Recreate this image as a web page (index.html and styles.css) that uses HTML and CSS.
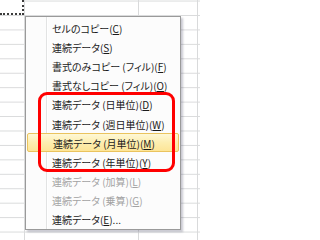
FILE: index.html
```html
<!DOCTYPE html>
<html lang="ja">
<head>
<meta charset="utf-8">
<link rel="stylesheet" href="styles.css">
</head>
<body>
<div class="sheet">
  <div class="cell-selected"></div>
  <div class="menu">
    <div class="item">セルのコピー(<u>C</u>)</div>
    <div class="item">連続データ(<u>S</u>)</div>
    <div class="item">書式のみコピー (フィル)(<u>F</u>)</div>
    <div class="item">書式なしコピー (フィル)(<u>O</u>)</div>
    <div class="item">連続データ (日単位)(<u>D</u>)</div>
    <div class="item">連続データ (週日単位)(<u>W</u>)</div>
    <div class="item hover">連続データ (月単位)(<u>M</u>)</div>
    <div class="item">連続データ (年単位)(<u>Y</u>)</div>
    <div class="item disabled">連続データ (加算)(<u>L</u>)</div>
    <div class="item disabled">連続データ (乗算)(<u>G</u>)</div>
    <div class="item">連続データ(<u>E</u>)...</div>
  </div>
  <div class="mark"></div>
</div>
</body>
</html>
```

FILE: styles.css
```css
html, body {
  margin: 0;
  padding: 0;
  background: #ffffff;
}
.sheet {
  position: relative;
  width: 200px;
  height: 240px;
  overflow: hidden;
  background-color: #ffffff;
  background-image:
    linear-gradient(to right, transparent 0 24px, #d9dadb 24px 25px, transparent 25px 138px, #d9dadb 138px 139px, transparent 139px 197px, #d9dadb 197px 198px, transparent 198px),
    linear-gradient(to bottom, #d9dadb 0 1px, transparent 1px);
  background-size: 100% 100%, 100% 14.44px;
  background-position: 0 0, 0 15px;
  background-repeat: no-repeat, repeat;
  font-family: "Noto Sans CJK JP", "Noto Sans", sans-serif;
  font-feature-settings: "palt";
}
.cell-selected {
  width: 22px;
  height: 13px;
  border-right: 2px dotted #3c3c3c;
  border-bottom: 2px dotted #3c3c3c;
  background: #ffffff;
}
.menu {
  position: absolute;
  left: 25px;
  top: 16px;
  width: 156px;
  box-sizing: border-box;
  border: 1px solid #9a9a9a;
  background-color: #fcfcfc;
  background-image: linear-gradient(to right, transparent 0 20px, #e2e3e3 20px 21px, #ffffff 21px 22px, transparent 22px);
  box-shadow: 2px 2px 2px rgba(60, 60, 90, 0.28);
  padding: 1px 0 0 0;
}
.item {
  height: 19.2px;
  box-sizing: border-box;
  display: flex;
  align-items: center;
  padding: 1px 0 0 26px;
  font-size: 10px;
  color: #1a1a1a;
  white-space: nowrap;
  letter-spacing: 0;
}
.item u {
  text-decoration-thickness: 1px;
  text-underline-offset: 1px;
}
.item.hover {
  margin: 0 1px;
  padding-left: 25px;
  border: 1px solid #eac35e;
  border-radius: 2px;
  background: linear-gradient(to bottom, #fef8d6 0%, #fdeeb0 50%, #fde597 100%);
}
.item.disabled {
  color: #a3a3a3;
}
.mark {
  position: absolute;
  left: 38px;
  top: 92px;
  width: 137px;
  height: 80px;
  box-sizing: border-box;
  border: 3.5px solid #ff0000;
  border-radius: 9px;
}
```
